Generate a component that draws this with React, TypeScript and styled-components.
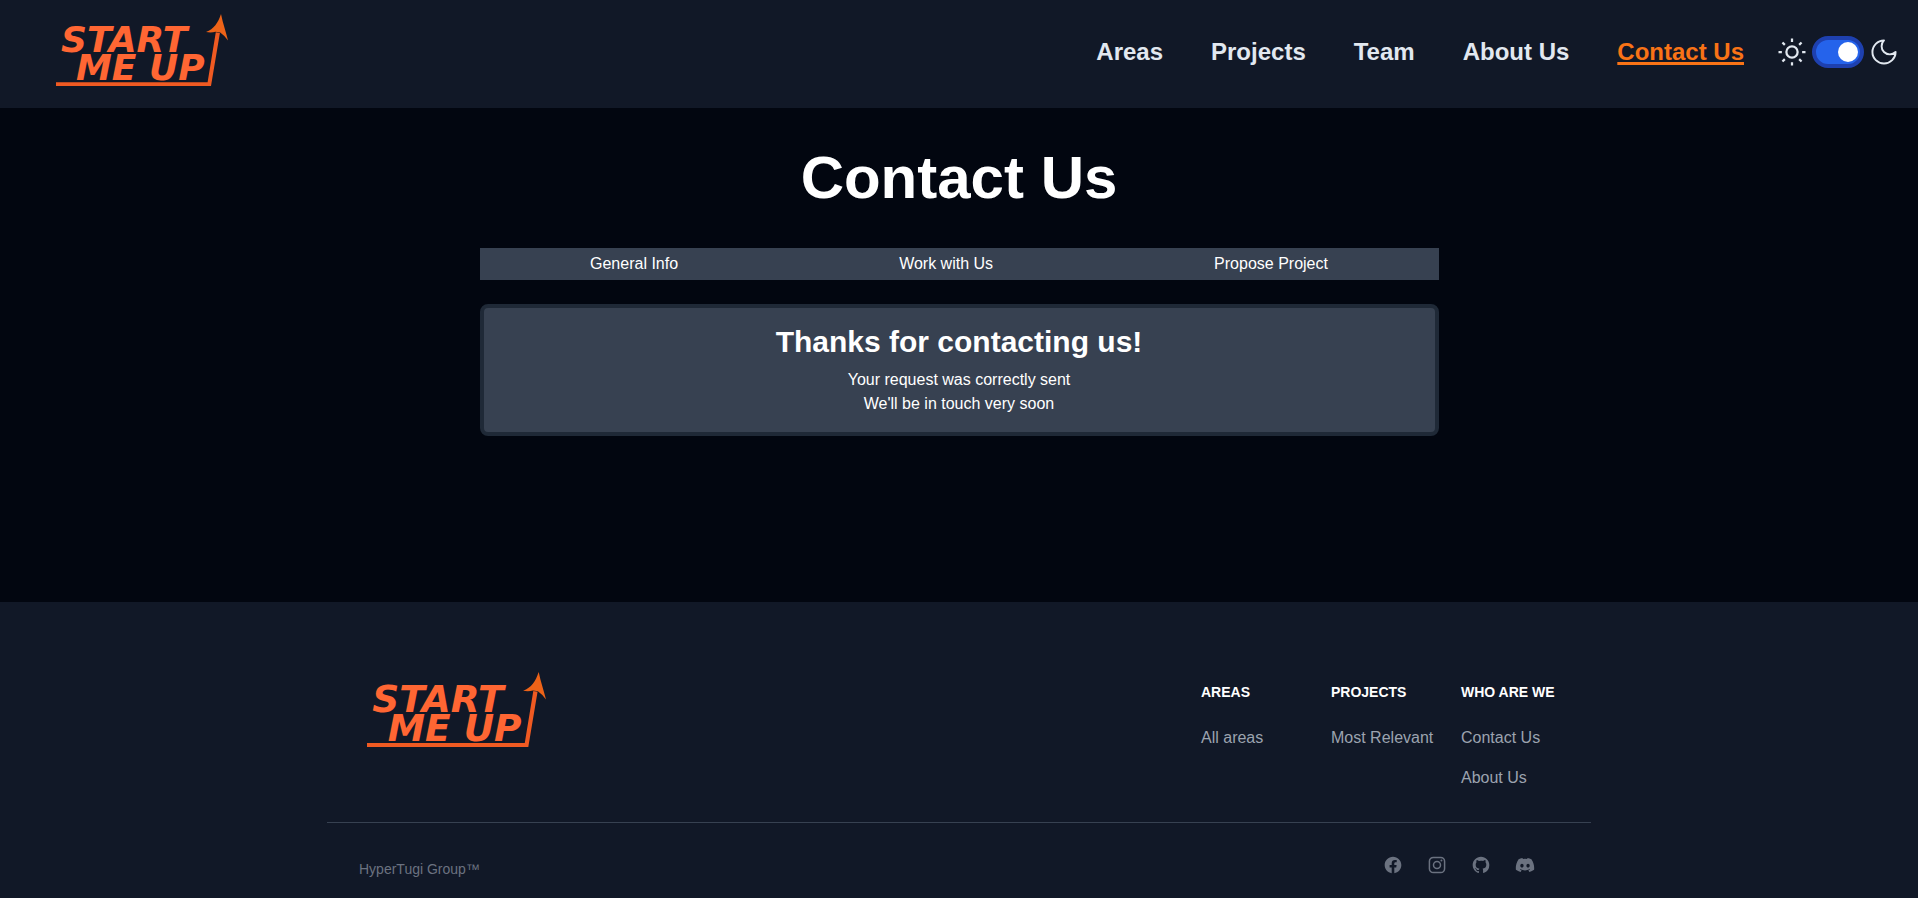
import React from "react";
import styled, { createGlobalStyle } from "styled-components";
import { FaDiscord } from "react-icons/fa";

const GlobalStyle = createGlobalStyle`
  *, *::before, *::after { box-sizing: border-box; }
  body {
    margin: 0;
    background: #020610;
    color: #ffffff;
    font-family: "Liberation Sans", Arial, sans-serif;
    font-size: 16px;
    line-height: 24px;
  }
  h1, h2, h3, p, ul { margin: 0; padding: 0; }
  ul { list-style: none; }
  a { color: inherit; text-decoration: none; }
`;

const Page = styled.div`
  display: flex;
  flex-direction: column;
  min-height: 100vh;
`;

const Header = styled.header`
  display: flex;
  align-items: center;
  justify-content: space-between;
  min-height: 108px;
  padding: 0 16px 4px 56px;
  background: #111827;
`;

const HomeLink = styled.a`
  padding-bottom: 4px;
`;

const LogoSvg = styled.svg<{ $width: number }>`
  display: block;
  width: ${(p) => p.$width}px;
  height: auto;
  overflow: visible;
`;

const LogoText = styled.text`
  font-family: "DejaVu Sans", Verdana, sans-serif;
  font-size: 36px;
  font-weight: 700;
  font-style: italic;
  fill: #ff6633;
`;

const HeaderEnd = styled.div`
  display: flex;
  align-items: center;
  gap: 30px;
`;

const Nav = styled.nav`
  display: flex;
  gap: 48px;
`;

const NavLink = styled.a<{ $active?: boolean }>`
  font-size: 24px;
  line-height: 32px;
  font-weight: 700;
  color: ${(p) => (p.$active ? "#f97316" : "#e2e8f0")};
  text-decoration: ${(p) => (p.$active ? "underline 3px" : "none")};
`;

const ThemeSwitch = styled.label`
  display: flex;
  align-items: center;
  gap: 2px;
  color: #e2e8f0;
  cursor: pointer;
`;

const ThemeIcon = styled.svg`
  width: 36px;
  height: 36px;
  fill: none;
  stroke: currentColor;
  stroke-width: 1.5;
  stroke-linejoin: round;
`;

const Toggle = styled.input`
  appearance: none;
  display: flex;
  justify-content: flex-start;
  align-items: center;
  width: 52px;
  height: 32px;
  margin: 0;
  padding: 2px;
  border: 4px solid #1e40af;
  border-radius: 16px;
  background: #2563eb;
  cursor: pointer;

  &::before {
    content: "";
    width: 20px;
    height: 20px;
    border-radius: 50%;
    background: #ffffff;
  }
  &:checked {
    justify-content: flex-end;
  }
`;

const Main = styled.main`
  flex: 1;
  display: flex;
  flex-direction: column;
  align-items: center;
  padding: 40px 0;
`;

const Title = styled.h1`
  font-size: 60px;
  line-height: 60px;
  font-weight: 700;
`;

const Tabs = styled.div`
  display: flex;
  justify-content: space-around;
  width: 50%;
  margin-top: 40px;
  background: #374151;
`;

const Tab = styled.button`
  padding: 4px 0;
  border: 0;
  background: none;
  color: inherit;
  font: inherit;
  cursor: pointer;
`;

const Card = styled.section`
  width: 50%;
  margin-top: 24px;
  padding: 16px;
  border: 4px solid #1f2937;
  border-radius: 8px;
  background: #374151;
  text-align: center;
`;

const CardTitle = styled.h2`
  margin-bottom: 8px;
  font-size: 30px;
  line-height: 36px;
  font-weight: 700;
`;

const Footer = styled.footer`
  padding: 64px 0 15px;
  background: #111827;
`;

const FooterInner = styled.div`
  width: 100%;
  max-width: 1264px;
  margin: 0 auto;
`;

const FooterTop = styled.div`
  display: flex;
  justify-content: space-between;
  align-items: flex-start;
  padding: 0 32px 32px;
  border-bottom: 1px solid #374151;
`;

const FooterLogo = styled.a`
  padding: 6px 8px;
`;

const Columns = styled.div`
  display: grid;
  grid-template-columns: repeat(3, 98px);
  gap: 32px;
  padding-top: 16px;
  white-space: nowrap;
`;

const ColumnTitle = styled.h3`
  margin-bottom: 24px;
  font-size: 14px;
  line-height: 20px;
  font-weight: 700;
  text-transform: uppercase;
`;

const LinkList = styled.ul`
  display: grid;
  gap: 16px;
  color: #9ca3af;
`;

const FooterBottom = styled.div`
  display: flex;
  justify-content: space-between;
  align-items: flex-start;
  padding: 32px 56px 0 32px;
  color: #6b7280;
`;

const Copyright = styled.span`
  font-size: 14px;
  line-height: 28px;
`;

const Socials = styled.div`
  display: flex;
  gap: 24px;
`;

const SocialLink = styled.a`
  display: flex;
  width: 20px;
  height: 20px;

  svg {
    width: 20px;
    height: 20px;
    fill: currentColor;
  }
`;

const Logo = ({ width }: { width: number }) => (
  <LogoSvg $width={width} viewBox="0 0 172 72" role="img" aria-label="Start Me Up">
    <LogoText>
      <tspan x="5" y="38">START</tspan>
      <tspan x="20" y="66">ME UP</tspan>
    </LogoText>
    <path d="M0 68.3H151.6L159.8 18.2L163.9 19L155 72H0Z" fill="#f05a22" />
    <path
      d="M165 0C162 9 158 15 150 18Q155 19 159.5 17.800L164.2 18.5Q168 21 172 26.5C170 18 167 10 165 0Z"
      fill="#ee6318"
    />
  </LogoSvg>
);

const columns = [
  { title: "Areas", links: ["All areas"] },
  { title: "Projects", links: ["Most Relevant"] },
  { title: "Who are we", links: ["Contact Us", "About Us"] },
];

const navItems = ["Areas", "Projects", "Team", "About Us", "Contact Us"];

export default function App() {
  return (
    <>
      <GlobalStyle />
      <Page>
        <Header>
          <HomeLink href="#home">
            <Logo width={172} />
          </HomeLink>
          <HeaderEnd>
            <Nav>
              {navItems.map((item) => (
                <NavLink key={item} href="#" $active={item === "Contact Us"}>
                  {item}
                </NavLink>
              ))}
            </Nav>
            <ThemeSwitch>
              <ThemeIcon viewBox="0 0 24 24" aria-hidden="true">
                <path d="M12 3v2.25m6.364.386l-1.591 1.591M21 12h-2.25m-.386 6.364l-1.591-1.591M12 18.75V21m-4.773-4.227l-1.591 1.591M5.25 12H3m4.227-4.773L5.636 5.636M15.75 12a3.75 3.75 0 11-7.5 0 3.75 3.75 0 017.5 0z" />
              </ThemeIcon>
              <Toggle type="checkbox" role="switch" defaultChecked aria-label="Dark theme" />
              <ThemeIcon viewBox="-2 -2 28 28" aria-hidden="true">
                <path d="M12 3a6 6 0 0 0 9 9 9 9 0 1 1-9-9Z" />
              </ThemeIcon>
            </ThemeSwitch>
          </HeaderEnd>
        </Header>

        <Main>
          <Title>Contact Us</Title>
          <Tabs>
            <Tab type="button">General Info</Tab>
            <Tab type="button">Work with Us</Tab>
            <Tab type="button">Propose Project</Tab>
          </Tabs>
          <Card>
            <CardTitle>Thanks for contacting us!</CardTitle>
            <p>Your request was correctly sent</p>
            <p>We'll be in touch very soon</p>
          </Card>
        </Main>

        <Footer>
          <FooterInner>
            <FooterTop>
              <FooterLogo href="#home">
                <Logo width={179} />
              </FooterLogo>
              <Columns>
                {columns.map((column) => (
                  <div key={column.title}>
                    <ColumnTitle>{column.title}</ColumnTitle>
                    <LinkList>
                      {column.links.map((link) => (
                        <li key={link}>
                          <a href="#">{link}</a>
                        </li>
                      ))}
                    </LinkList>
                  </div>
                ))}
              </Columns>
            </FooterTop>
            <FooterBottom>
              <Copyright>HyperTugi Group™</Copyright>
              <Socials>
                <SocialLink href="#" aria-label="Facebook">
                  <svg viewBox="0 0 24 24">
                    <path d="M22 12c0-5.523-4.477-10-10-10S2 6.477 2 12c0 4.991 3.657 9.128 8.438 9.878v-6.987h-2.54V12h2.54V9.797c0-2.506 1.492-3.89 3.777-3.89 1.094 0 2.238.195 2.238.195v2.46h-1.26c-1.243 0-1.63.771-1.63 1.562V12h2.773l-.443 2.89h-2.33v6.988C18.343 21.128 22 16.991 22 12z" />
                  </svg>
                </SocialLink>
                <SocialLink href="#" aria-label="Instagram">
                  <svg viewBox="0 0 24 24">
                    <rect x="2.9" y="2.9" width="18.2" height="18.2" rx="4.6" fill="none" stroke="currentColor" strokeWidth="1.8" />
                    <circle cx="12" cy="12" r="4.2" fill="none" stroke="currentColor" strokeWidth="1.8" />
                    <circle cx="17.3" cy="6.7" r="1.2" />
                  </svg>
                </SocialLink>
                <SocialLink href="#" aria-label="GitHub">
                  <svg viewBox="0 0 24 24">
                    <path d="M12 2C6.477 2 2 6.484 2 12.017c0 4.425 2.865 8.18 6.839 9.504.5.092.682-.217.682-.483 0-.237-.008-.868-.013-1.703-2.782.605-3.369-1.343-3.369-1.343-.454-1.158-1.11-1.466-1.11-1.466-.908-.62.069-.608.069-.608 1.003.07 1.531 1.032 1.531 1.032.892 1.53 2.341 1.088 2.91.832.092-.647.35-1.088.636-1.338-2.22-.253-4.555-1.113-4.555-4.951 0-1.093.39-1.988 1.029-2.688-.103-.253-.446-1.272.098-2.65 0 0 .84-.27 2.75 1.026A9.564 9.564 0 0112 6.844c.85.004 1.705.115 2.504.337 1.909-1.296 2.747-1.027 2.747-1.027.546 1.379.202 2.398.1 2.651.64.7 1.028 1.595 1.028 2.688 0 3.848-2.339 4.695-4.566 4.943.359.309.678.92.678 1.855 0 1.338-.012 2.419-.012 2.747 0 .268.18.58.688.482A10.019 10.019 0 0022 12.017C22 6.484 17.522 2 12 2z" />
                  </svg>
                </SocialLink>
                <SocialLink href="#" aria-label="Discord">
                  <FaDiscord />
                </SocialLink>
              </Socials>
            </FooterBottom>
          </FooterInner>
        </Footer>
      </Page>
    </>
  );
}
